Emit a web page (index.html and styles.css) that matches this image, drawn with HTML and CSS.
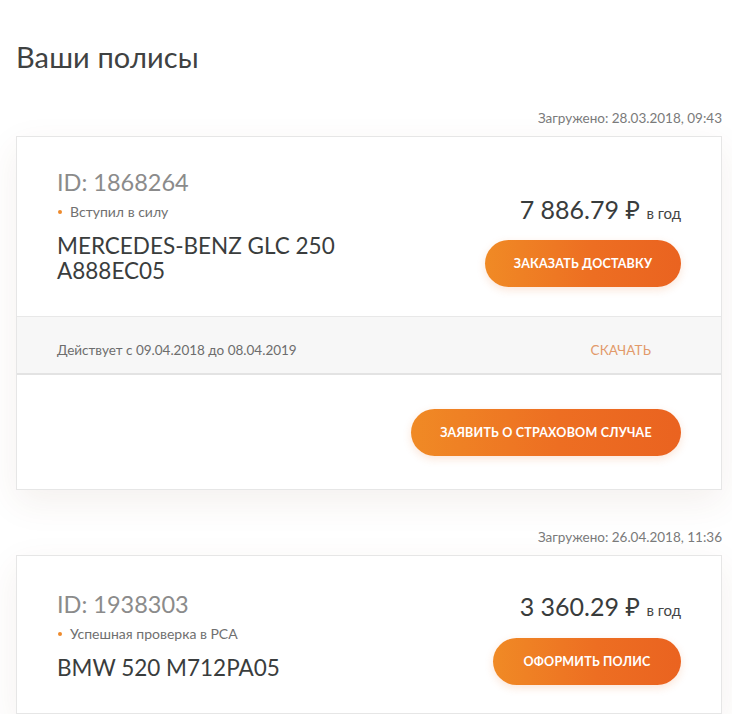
FILE: index.html
```html
<!DOCTYPE html>
<html lang="ru">
<head>
<meta charset="utf-8">
<link rel="stylesheet" href="styles.css">
</head>
<body>
<main class="page">
  <h1 class="title">Ваши полисы</h1>

  <section class="policy">
    <div class="loaded">Загружено: 28.03.2018, 09:43</div>
    <div class="card">
      <div class="card-main">
        <div class="info">
          <div class="id">ID: 1868264</div>
          <div class="status"><span class="dot"></span>Вступил в силу</div>
          <div class="car">MERCEDES-BENZ GLC 250<br>A888EC05</div>
        </div>
        <div class="side">
          <div class="price">7 886.79 ₽ <span class="per">в год</span></div>
          <button class="btn">Заказать доставку</button>
        </div>
      </div>
      <div class="card-strip">
        <span class="period">Действует с 09.04.2018 до 08.04.2019</span>
        <a class="download">СКАЧАТЬ</a>
      </div>
      <div class="card-foot">
        <button class="btn btn-wide">Заявить о страховом случае</button>
      </div>
    </div>
  </section>

  <section class="policy policy-next">
    <div class="loaded">Загружено: 26.04.2018, 11:36</div>
    <div class="card">
      <div class="card-main card-main-short">
        <div class="info">
          <div class="id">ID: 1938303</div>
          <div class="status"><span class="dot"></span>Успешная проверка в РСА</div>
          <div class="car">BMW 520 M712PA05</div>
        </div>
        <div class="side side-short">
          <div class="price">3 360.29 ₽ <span class="per">в год</span></div>
          <button class="btn btn-narrow">Оформить полис</button>
        </div>
      </div>
    </div>
  </section>
</main>
</body>
</html>
```

FILE: styles.css
```css
* { box-sizing: border-box; }
html, body { margin: 0; padding: 0; background: #fff; }
body {
  font-family: "Lato", "Noto Sans", sans-serif;
  color: #3c3f3f;
  overflow: hidden;
}
.page {
  padding: 0 10px 0 16px;
}
.title {
  margin: 0;
  padding-top: 40px;
  font-size: 29px;
  font-weight: 400;
  line-height: 34px;
  color: #3f4242;
  letter-spacing: 0.1px;
}
.policy {
  margin-top: 36px;
}
.policy-next { margin-top: 39px; }
.loaded {
  text-align: right;
  font-size: 13.5px;
  line-height: 16px;
  color: #7a7a7a;
  margin-bottom: 10px;
}
.card {
  background: #fff;
  border: 1px solid #e6e6e6;
  box-shadow: 0 12px 34px rgba(110, 60, 40, 0.08);
}
.card-main {
  display: flex;
  justify-content: space-between;
  padding: 32px 40px 0 40px;
  height: 179px;
}
.card-main-short {
  height: 157px;
  padding-top: 35px;
}
.id {
  font-size: 23.5px;
  line-height: 26px;
  color: #8b8b8b;
}
.status {
  margin-top: 9px;
  font-size: 14px;
  line-height: 16px;
  color: #707070;
  display: flex;
  align-items: center;
}
.dot {
  width: 4px; height: 4px;
  border-radius: 50%;
  background: #ee8a2c;
  margin: 0 8px 0 1px;
}
.car {
  margin-top: 13px;
  font-size: 22.5px;
  line-height: 25px;
  color: #3a3d3d;
}
.side {
  display: flex;
  flex-direction: column;
  align-items: flex-end;
  padding-top: 27px;
}
.side-short { padding-top: 2px; }
.price {
  font-size: 25px;
  line-height: 26px;
  color: #393c3c;
}
.per {
  font-size: 15px;
  color: #444;
}
.btn {
  margin-top: 14px;
  border: 0;
  border-radius: 24px;
  height: 47px;
  width: 196px;
  background: linear-gradient(90deg, #f08a25 0%, #ed6e22 55%, #ea6320 100%);
  color: #fff;
  font-family: inherit;
  font-weight: 700;
  font-size: 12.5px;
  letter-spacing: 0.2px;
  text-transform: uppercase;
  box-shadow: 0 3px 8px rgba(235, 110, 40, 0.18);
}
.btn-narrow { width: 188px; margin-top: 15px; }
.btn-wide { width: 270px; margin-top: 0; }
.card-strip {
  display: flex;
  justify-content: space-between;
  align-items: center;
  height: 59px;
  padding: 9px 70px 0 40px;
  background: #f7f7f7;
  border-top: 1px solid #e8e8e8;
  border-bottom: 2px solid #e3e3e3;
}
.period {
  font-size: 13.5px;
  color: #6d6d6d;
}
.download {
  font-size: 13.5px;
  color: #e29a6a;
  letter-spacing: 0.1px;
}
.card-foot {
  display: flex;
  justify-content: flex-end;
  padding: 34px 40px 0;
  height: 114px;
}
```
